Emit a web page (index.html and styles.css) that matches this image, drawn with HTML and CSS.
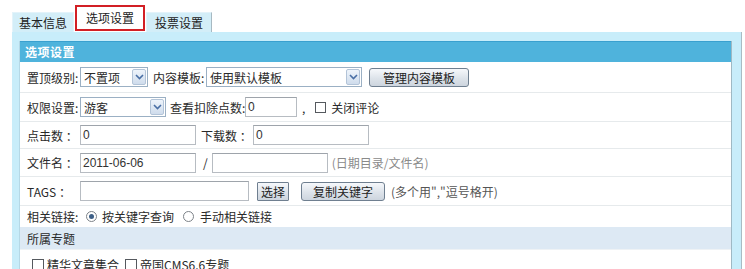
FILE: index.html
```html
<!DOCTYPE html>
<html lang="zh-CN">
<head>
<meta charset="utf-8">
<link rel="stylesheet" href="styles.css">
</head>
<body>
<div class="tabs">
  <div class="tab t1">基本信息</div>
  <div class="tab active">选项设置</div>
  <div class="tab last">投票设置</div>
</div>
<div class="panel">
  <div class="box">
    <div class="head">选项设置</div>
    <div class="row r1">
      <span class="lbl">置顶级别:</span>
      <span class="sel w68"><span class="val">不置项</span><span class="arr"><svg width="9" height="6" viewBox="0 0 9 6"><path d="M1 1 L4.5 4.5 L8 1" fill="none" stroke="#4a6fa5" stroke-width="1.6"/></svg></span></span>
      <span class="lbl ml5">内容模板:</span>
      <span class="sel w156"><span class="val">使用默认模板</span><span class="arr"><svg width="9" height="6" viewBox="0 0 9 6"><path d="M1 1 L4.5 4.5 L8 1" fill="none" stroke="#4a6fa5" stroke-width="1.6"/></svg></span></span>
      <span class="btn b100">管理内容模板</span>
    </div>
    <div class="row r2">
      <span class="lbl">权限设置:</span>
      <span class="sel w86"><span class="val">游客</span><span class="arr"><svg width="9" height="6" viewBox="0 0 9 6"><path d="M1 1 L4.5 4.5 L8 1" fill="none" stroke="#4a6fa5" stroke-width="1.6"/></svg></span></span>
      <span class="lbl ml4">查看扣除点数:</span>
      <span class="inp w52">0</span>
      <span class="txt comma">,</span>
      <span class="chk"></span>
      <span class="txt">关闭评论</span>
    </div>
    <div class="row r3">
      <span class="lbl">点击数 ：</span>
      <span class="inp w116">0</span>
      <span class="lbl ml5">下载数 ：</span>
      <span class="inp w116">0</span>
    </div>
    <div class="row r4">
      <span class="lbl">文件名 ：</span>
      <span class="inp w116">2011-06-06</span>
      <span class="txt slash">/</span>
      <span class="inp w116"></span>
      <span class="txt gray">(日期目录/文件名)</span>
    </div>
    <div class="row r5">
      <span class="lbl">TAGS ：</span>
      <span class="inp w166"></span>
      <span class="btn b32">选择</span>
      <span class="btn b84">复制关键字</span>
      <span class="txt gray2">(多个用","逗号格开)</span>
    </div>
    <div class="row r6">
      <span class="lbl">相关链接:</span>
      <span class="radio on"></span>
      <span class="txt">按关键字查询</span>
      <span class="radio second"></span>
      <span class="txt">手动相关链接</span>
    </div>
    <div class="row section">所属专题</div>
    <div class="row r8">
      <span class="chk first"></span>
      <span class="txt">精华文章集合</span>
      <span class="chk"></span>
      <span class="txt">帝国CMS6.6专题</span>
    </div>
  </div>
</div>
</body>
</html>
```
FILE: styles.css
```css
html, body {
  margin: 0;
  padding: 0;
  background: #fff;
}
body {
  font-family: "Noto Sans CJK SC", "Liberation Sans", sans-serif;
  font-size: 12px;
  color: #2a2a2a;
  width: 745px;
  height: 269px;
  overflow: hidden;
}
.tabs {
  display: flex;
  align-items: flex-end;
  padding-left: 12px;
  height: 32px;
  gap: 1px;
}
.tab {
  box-sizing: border-box;
  height: 20px;
  line-height: 19px;
  background: #d3eef8;
  border: 1px solid #e3f3fa;
  border-bottom: none;
  font-size: 12px;
  color: #222;
  text-align: center;
  white-space: nowrap;
}
.t1 { width: 62px; }
.tab.active {
  width: 70px;
  background: #fff;
  border: 2px solid #d21f25;
  height: 26px;
  line-height: 22px;
  margin-bottom: 1px;
}
.tab.last {
  width: 66px;
  border-right: 1px solid #a7b9c2;
}
.panel {
  margin-left: 12px;
  width: 730px;
  background: #c8edfa;
  border-right: 1px solid #a9bcc4;
  padding: 9px 10px 0 7px;
  box-sizing: border-box;
  height: 240px;
}
.box {
  background: #fff;
  border-left: 1px solid #b5d8e6;
  border-right: 1px solid #9fb9c4;
  width: 713px;
  box-sizing: border-box;
}
.head {
  height: 20px;
  line-height: 20px;
  background: #4fb3dc;
  border-top: 1px solid #3aa0cf;
  color: #fff;
  font-weight: bold;
  padding-left: 5px;
  letter-spacing: 0.5px;
}
.row {
  display: flex;
  align-items: center;
  padding-left: 7px;
  border-bottom: 1px solid #e6eaec;
}
.r1 { height: 30px; }
.r2 { height: 28px; }
.r3 { height: 26px; }
.r4 { height: 27px; }
.r5 { height: 28px; }
.r6 { height: 21px; border-bottom: none; }
.section {
  height: 22px;
  background: #dde9f4;
  border-bottom: 1px solid #eef2f5;
}
.r8 { height: 23px; border-bottom: none; align-items: flex-end; }
.lbl {
  white-space: nowrap;
  width: 53px;
}
.ml5 { margin-left: 5px; }
.ml4 { margin-left: 4px; width: 75px; }
.r3 .lbl.ml5 { margin-left: 5px; width: 52px; }
.txt { white-space: nowrap; }
.gray { color: #8a8a8a; margin-left: 4px; }
.gray2 { color: #555; margin-left: 6px; }
.sel {
  display: inline-flex;
  align-items: center;
  height: 20px;
  box-sizing: border-box;
  border: 1px solid #9bb0c4;
  background: #fff;
  justify-content: space-between;
}
.sel .val { padding-left: 3px; }
.sel .arr {
  width: 14px;
  height: 16px;
  margin-right: 1px;
  border: 1px solid #b3c4d8;
  border-radius: 2px;
  background: linear-gradient(#eef4fb, #cfdcec);
  display: flex;
  align-items: center;
  justify-content: center;
  box-sizing: border-box;
}
.w68 { width: 68px; }
.w156 { width: 156px; }
.w86 { width: 86px; }
.inp {
  display: inline-flex;
  align-items: center;
  height: 20px;
  box-sizing: border-box;
  border: 1px solid #b7bcc2;
  border-top-color: #9ea4ab;
  padding-left: 2px;
  background: #fff;
  color: #333;
  font-family: "Liberation Sans", "Noto Sans CJK SC", sans-serif;
}
.w52 { width: 52px; }
.w116 { width: 116px; }
.w166 { width: 169px; }
.btn {
  display: inline-flex;
  align-items: center;
  justify-content: center;
  height: 19px;
  box-sizing: border-box;
  border: 1px solid #6f7f90;
  border-radius: 3px;
  background: linear-gradient(#f6f8fb, #dde3ea 55%, #cdd5de);
  color: #222;
  white-space: nowrap;
}
.b100 { width: 100px; margin-left: 7px; }
.b32 { width: 32px; margin-left: 8px; border-radius: 1px; }
.b84 { width: 84px; margin-left: 12px; }
.comma { margin-left: 5px; }
.chk {
  display: inline-block;
  width: 11px;
  height: 11px;
  box-sizing: border-box;
  border: 1px solid #55595e;
  background: #fff;
  margin: 0 5px 0 10px;
}
.r8 .chk { width: 12px; height: 12px; margin: 0 3px 2px 6px; }
.r8 .chk.first { margin-left: 5px; }
.slash { margin: 0 4px 0 7px; }
.radio {
  display: inline-block;
  width: 11px;
  height: 11px;
  box-sizing: border-box;
  border: 1px solid #7c8288;
  border-radius: 50%;
  background: #fff;
  margin: 0 5px 0 6px;
  position: relative;
}
.radio.on::after {
  content: "";
  position: absolute;
  left: 2px;
  top: 2px;
  width: 5px;
  height: 5px;
  border-radius: 50%;
  background: #3d5f86;
}
.radio.second { margin-left: 9px; margin-right: 6px; }
```
